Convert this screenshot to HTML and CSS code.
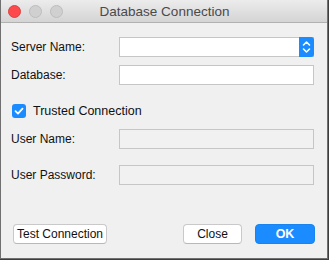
FILE: index.html
```html
<!DOCTYPE html>
<html>
<head>
<meta charset="utf-8">
<link rel="stylesheet" href="styles.css">
</head>
<body>
<div class="window">
  <div class="titlebar">
    <div class="lights">
      <span class="light red"></span>
      <span class="light"></span>
      <span class="light"></span>
    </div>
    <div class="title">Database Connection</div>
  </div>
  <div class="content">
    <div class="row r-server">
      <label class="label">Server Name:</label>
      <div class="field combo">
        <span class="stepper">
          <svg width="15" height="20" viewBox="0 0 15 20"><path d="M4.5 8 L7.5 5 L10.5 8 M4.5 12 L7.5 15 L10.5 12" fill="none" stroke="#fff" stroke-width="1.6" stroke-linecap="round" stroke-linejoin="round"/></svg>
        </span>
      </div>
    </div>
    <div class="row r-db">
      <label class="label">Database:</label>
      <div class="field"></div>
    </div>
    <div class="check-row">
      <span class="checkbox">
        <svg width="14" height="14" viewBox="0 0 14 14"><path d="M3.5 7.2 L6 9.6 L10.5 4.6" fill="none" stroke="#fff" stroke-width="1.8" stroke-linecap="round" stroke-linejoin="round"/></svg>
      </span>
      <span class="check-label">Trusted Connection</span>
    </div>
    <div class="row r-user">
      <label class="label">User Name:</label>
      <div class="field disabled"></div>
    </div>
    <div class="row r-pass">
      <label class="label">User Password:</label>
      <div class="field disabled"></div>
    </div>
    <div class="buttons">
      <button class="btn test">Test Connection</button>
      <span class="spacer"></span>
      <button class="btn close">Close</button>
      <button class="btn ok">OK</button>
    </div>
  </div>
</div>
</body>
</html>
```
FILE: styles.css
```css
html, body {
  margin: 0;
  padding: 0;
}
body {
  background: #3e3e3e;
  width: 329px;
  height: 260px;
  overflow: hidden;
  font-family: "Liberation Sans", Arial, sans-serif;
  font-size: 12px;
  color: #111;
}
.window {
  box-sizing: border-box;
  width: 328px;
  height: 259px;
  border: 1px solid #707070;
  border-top: none;
  background: #f0f0f0;
  display: flex;
  flex-direction: column;
}
.titlebar {
  position: relative;
  height: 22px;
  background: linear-gradient(#ececec, #d4d4d4);
  border-bottom: 1px solid #b1b1b1;
  display: flex;
  align-items: center;
  justify-content: center;
}
.lights {
  position: absolute;
  left: 7px;
  top: 5px;
  display: flex;
  gap: 8px;
}
.light {
  width: 11px;
  height: 11px;
  border-radius: 50%;
  background: #d0d0d0;
  border: 0.5px solid #bdbdbd;
}
.light.red {
  background: #fc4a4d;
  border-color: #e0403f;
}
.title {
  font-size: 13.5px;
  color: #4a4a4a;
  margin-left: 1px;
}
.content {
  padding: 14px 13px 0 10px;
  display: flex;
  flex-direction: column;
}
.row {
  display: flex;
  align-items: center;
  height: 20px;
}
.r-db { margin-top: 8px; }
.r-user { margin-top: 11px; }
.r-pass { margin-top: 16px; }
.label {
  width: 108px;
  color: #111;
}
.field {
  box-sizing: border-box;
  flex: 1;
  height: 20px;
  background: #fff;
  border: 1px solid #c6c6c6;
  position: relative;
}
.field.disabled {
  background: #f1f1f1;
}
.stepper {
  position: absolute;
  right: -1px;
  top: -1px;
  width: 15px;
  height: 20px;
  background: #1a8cff;
  border-radius: 0 3px 3px 0;
  display: flex;
}
.check-row {
  margin-top: 19px;
  display: flex;
  align-items: center;
  height: 14px;
  margin-left: 1px;
}
.checkbox {
  width: 14px;
  height: 14px;
  border-radius: 3px;
  background: #1a8cff;
  display: flex;
}
.check-label {
  margin-left: 7px;
  font-size: 12.5px;
}
.buttons {
  margin-top: 39px;
  display: flex;
  align-items: center;
  padding-left: 2px;
}
.spacer { flex: 1; }
.btn {
  box-sizing: border-box;
  height: 20px;
  font-family: "Liberation Sans", Arial, sans-serif;
  font-size: 12px;
  color: #111;
  background: #fff;
  border: 1px solid #c9c9c9;
  border-bottom-color: #b8b8b8;
  border-radius: 4px;
  padding: 0;
}
.test { width: 94px; }
.close { width: 59px; }
.ok {
  width: 60px;
  margin-left: 13px;
  margin-right: -1px;
  background: #1a8cff;
  border-color: #1784f0;
  color: #fff;
  font-weight: bold;
  font-size: 12.5px;
}
```
